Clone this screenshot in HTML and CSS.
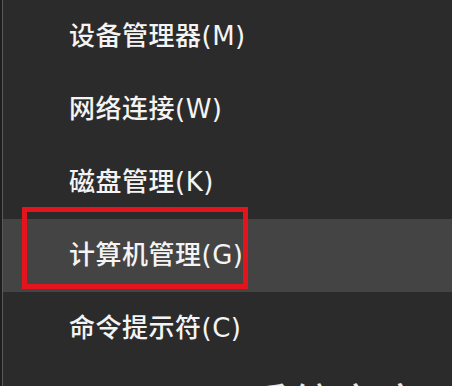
FILE: index.html
```html
<!DOCTYPE html>
<html lang="zh-CN">
<head>
<meta charset="utf-8">
<title>Win+X 菜单</title>
<link rel="stylesheet" href="styles.css">
</head>
<body>
<div class="menu">
  <div class="item">设备管理器(M)</div>
  <div class="item">网络连接(W)</div>
  <div class="item">磁盘管理(K)</div>
  <div class="item active">计算机管理(G)<span class="mark"></span></div>
  <div class="item">命令提示符(C)</div>
  <div class="watermark">系统之家下载站</div>
</div>
</body>
</html>
```
FILE: styles.css
```css
html, body {
  margin: 0;
  padding: 0;
  background: #1e1e1e;
}
body {
  width: 452px;
  height: 386px;
  overflow: hidden;
  padding-left: 2px;
  box-sizing: border-box;
}
.menu {
  position: relative;
  height: 386px;
  width: 449px;
  background: #2b2b2b;
  border-left: 1px solid #5a5a5a;
  border-right: 1px solid #6a6a6a;
  overflow: hidden;
  font-family: "DejaVu Sans", "Noto Sans CJK SC", sans-serif;
  color: #f4f4f4;
}
.item {
  position: relative;
  height: 73px;
  line-height: 73px;
  font-size: 26px;
  font-weight: 500;
  letter-spacing: 0.5px;
  padding-left: 66px;
  white-space: nowrap;
}
.item.active {
  background: #444444;
}
.mark {
  position: absolute;
  left: 19px;
  top: -12px;
  width: 216px;
  height: 72px;
  border: 5px solid #e3141b;
}
.watermark {
  position: absolute;
  left: 244px;
  top: 372px;
  font-family: "Noto Sans CJK SC", sans-serif;
  font-size: 44px;
  line-height: 60px;
  color: #e8e8e8;
  white-space: nowrap;
}
```
